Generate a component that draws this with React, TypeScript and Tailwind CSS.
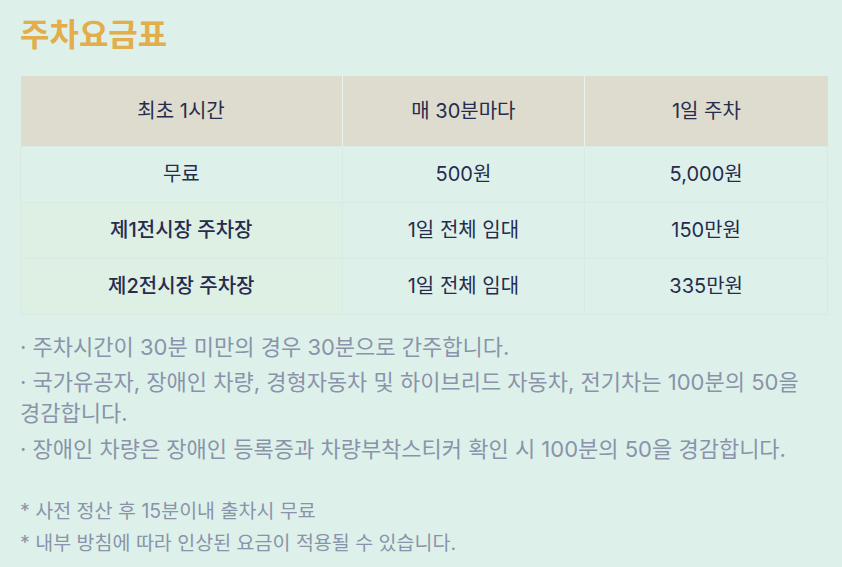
const HEAD = ["최초 1시간", "매 30분마다", "1일 주차"];

const ROWS: { label: string; strong?: boolean; cells: string[] }[] = [
  { label: "무료", cells: ["500원", "5,000원"] },
  { label: "제1전시장 주차장", strong: true, cells: ["1일 전체 임대", "150만원"] },
  { label: "제2전시장 주차장", strong: true, cells: ["1일 전체 임대", "335만원"] },
];

const NOTES = [
  "· 주차시간이 30분 미만의 경우 30분으로 간주합니다.",
  "· 국가유공자, 장애인 차량, 경형자동차 및 하이브리드 자동차, 전기차는 100분의 50을 경감합니다.",
  "· 장애인 차량은 장애인 등록증과 차량부착스티커 확인 시 100분의 50을 경감합니다.",
];

export default function App() {
  return (
    <div
      className="min-h-[567px] w-[842px] bg-[#ddf1ea] pl-5 pr-[14px] pt-[15px]"
      style={{ fontFamily: 'Inter, "Noto Sans CJK KR", sans-serif' }}
    >
      <h1 className="text-[32px] font-bold leading-[40px] text-[#e2ad4a]">주차요금표</h1>

      <table className="mt-[21px] w-[808px] border-collapse text-[20px] text-[#262c4d]">
        <colgroup>
          <col className="w-[322px]" />
          <col className="w-[243px]" />
          <col className="w-[243px]" />
        </colgroup>
        <thead>
          <tr className="h-[70px] bg-[#dedbcf]">
            {HEAD.map((h, i) => (
              <th
                key={h}
                className={
                  i > 0
                    ? "border-l border-[#e9f2ed] text-center font-normal"
                    : "text-center font-normal"
                }
              >
                {h}
              </th>
            ))}
          </tr>
        </thead>
        <tbody>
          {ROWS.map((r) => (
            <tr key={r.label} className="h-[56px]">
              <td
                className={
                  r.strong
                    ? "border border-[#d8eae1] bg-[#deefe4] text-center font-medium"
                    : "border border-[#d8eae1] text-center"
                }
              >
                {r.label}
              </td>
              {r.cells.map((c, i) => (
                <td key={i} className="border border-[#d8eae1] text-center">
                  {c}
                </td>
              ))}
            </tr>
          ))}
        </tbody>
      </table>

      <ul className="mt-[17px] break-keep text-[22px] leading-[31px] text-[#8a93aa]">
        {NOTES.map((n) => (
          <li key={n} className="mb-[4.5px]">
            {n}
          </li>
        ))}
      </ul>

      <div className="mt-[30px] text-[19.5px] leading-[32px] text-[#8a93aa]">
        <p>* 사전 정산 후 15분이내 출차시 무료</p>
        <p>* 내부 방침에 따라 인상된 요금이 적용될 수 있습니다.</p>
      </div>
    </div>
  );
}
